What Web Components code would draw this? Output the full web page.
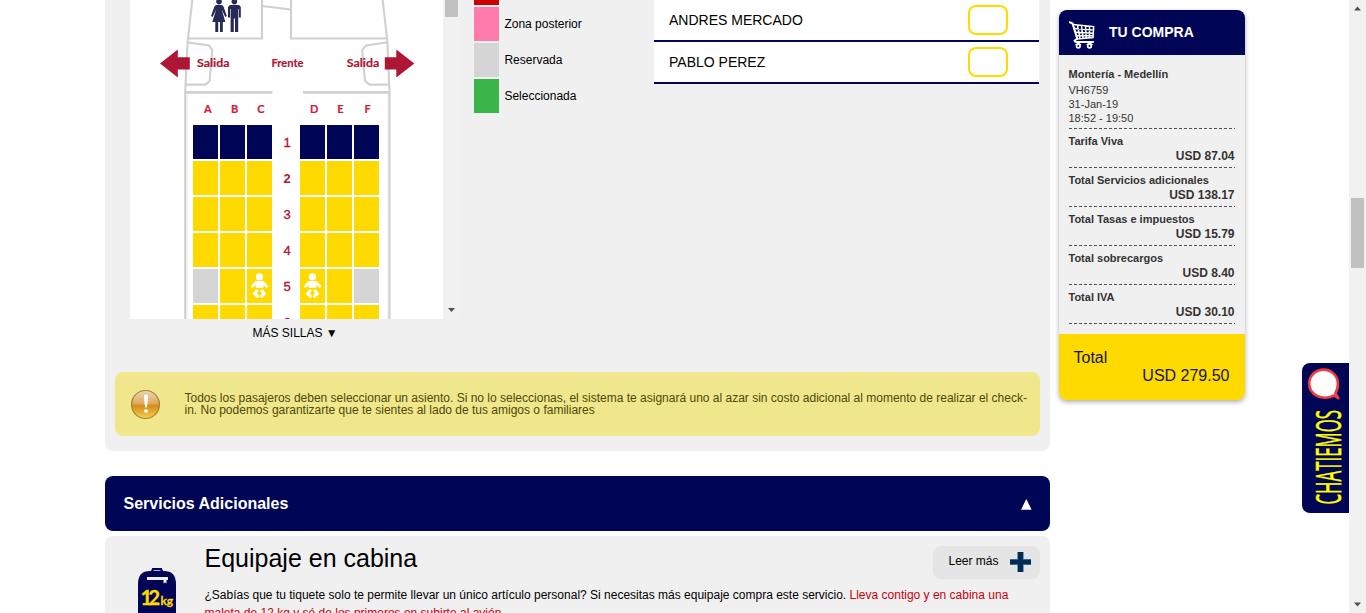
<!DOCTYPE html>
<html lang="es">
<head>
<meta charset="utf-8">
<title>Selección de sillas</title>
<style>
html,body{margin:0;height:613px;overflow:hidden;background:#fff}
body{font-family:"Liberation Sans",Arial,sans-serif;font-size:12px;color:#000}
</style>
</head>
<body>
<booking-page></booking-page>
<script>
const define = (name, html, setup) => customElements.define(name, class extends HTMLElement {
  constructor() {
    super();
    const t = document.createElement('template');
    t.innerHTML = html;
    this.attachShadow({mode: 'open'}).appendChild(t.content.cloneNode(true));
    if (setup) this.setup = setup;
  }
  connectedCallback() { if (this.setup) this.setup(this.shadowRoot); }
});

/* Aircraft outline with exits, front cabin and column letters */
define('plane-outline', `
<style>:host{display:block;width:313px;height:319px}svg{display:block}
text{font-family:Lato,"Open Sans",sans-serif;font-weight:700}</style>
<svg width="313" height="319" viewBox="0 0 313 319">
 <g fill="none" stroke="#d0d0d0" stroke-width="2.1">
  <path stroke="#efefef" stroke-width="1.5" d="M57 92V319M258 92V319"/>
  <path d="M62.3 0L57.6 42L55.2 92V319M252.7 0L257.4 42L259.5 92V319"/>
  <path d="M59 38.5H132V0M257 38.5H161V0M132 6L161 9.5"/>
  <path d="M58 42.5L79 45.5L82.3 50L79.6 81L75.5 84.6H56M257 42.5L236 45.5L232.2 50L235 81L239.5 84.6H259"/>
  <path stroke-width="2.6" d="M55 92.4H142.5M173 92.4H260"/>
 </g>
 <g fill="#ad1733">
  <path d="M30 63.5L47.8 49.5V57.3H59.8V69.6H47.8V77.4ZM284.3 63.5L266.3 49.5V57.3H254.8V69.6H266.3V77.4Z"/>
  <g font-size="11.8" stroke="#ad1733" stroke-width=".2">
   <text x="67" y="67.4" textLength="32.5" lengthAdjust="spacingAndGlyphs">Salida</text>
   <text x="141.5" y="67.4" textLength="32" lengthAdjust="spacingAndGlyphs">Frente</text>
   <text x="216.7" y="67.4" textLength="32.5" lengthAdjust="spacingAndGlyphs">Salida</text>
  </g>
 </g>
 <g fill="#d01a3c" stroke="#d01a3c" stroke-width=".2" font-size="11" text-anchor="middle">
  <text x="77.8" y="113">A</text><text x="104.5" y="113">B</text><text x="131" y="113">C</text>
  <text x="184.3" y="113">D</text><text x="210.5" y="113">E</text><text x="237.5" y="113">F</text>
 </g>
 <g fill="#252b55">
  <circle cx="89" cy="1.6" r="2.8"/><circle cx="104.4" cy="1.6" r="2.8"/>
  <path d="M86 5H92L93.5 6.5L96.8 16L95.2 17L91.8 9.5L95.3 22H92.8V32H90V22H88.2V32H85.3V22H82.3L86.2 9.5L82.6 17L81 16L84.4 6.5Z"/>
  <path d="M100 5H109L110.8 7V17.5H108.8V9H108.2V32H105V18.5H103.8V32H100.6V9H100V17.5H98V7Z"/>
 </g>
</svg>`);

define('plane-seat', `
<style>:host{display:block;width:25px;height:34px;background:#ffda00}
:host([kind=vip]){background:#000655}:host([kind=reserved]){background:#d5d5d5}
svg{display:none}:host([infant]) svg{display:block;width:25px;height:34px}</style>
<svg viewBox="0 0 25 34" fill="none" stroke="#fff" stroke-linecap="round" stroke-linejoin="round">
 <circle cx="12.5" cy="7.8" r="3.6" fill="#fff" stroke="none"/>
 <path stroke-width="2.8" d="M5.4 17.2L9 13.6H16L19.7 17.2"/>
 <path fill="#fff" stroke="none" d="M8.6 12.2H16.4V18.8H8.6Z"/>
 <path stroke-width="3.2" stroke-linejoin="miter" d="M9.9 22L7.8 24.6L10.4 27.2M15.1 22L17.2 24.6L14.6 27.2"/>
</svg>`);

define('seat-map', `
<style>
:host{display:grid;width:330px;height:319px;grid-template-columns:313px 17px;overflow:hidden}
.plane{background:#fff;display:grid;overflow:hidden;height:319px}
plane-outline,.seats{grid-area:1/1}
.seats{display:grid;grid-template-columns:repeat(3,25px) 24px repeat(3,25px);grid-auto-rows:34px;gap:2px;padding:125px 0 0 63px;align-content:start;height:194px}
.num{font-size:13px;line-height:35px;text-align:center;color:#ad1733;padding-left:2px;-webkit-text-stroke:.35px #ad1733}
.bold{font-weight:bold;-webkit-text-stroke:0}
.bar{background:#f1f1f1;display:flex;flex-direction:column;justify-content:space-between;align-items:center}
.thumb{width:13px;height:17px;background:#c1c1c1}
.bar svg{margin-bottom:6px;display:block}
</style>
<div class="plane"><plane-outline></plane-outline><div class="seats"></div></div>
<div class="bar"><div class="thumb"></div><svg width="7" height="6"><path fill="#505050" d="M0 1H7L3.5 5Z"/></svg></div>`,
root => {
  const box = root.querySelector('.seats');
  const rows = ['vvvvvv', 'ssssss', 'ssssss', 'ssssss', 'rsiisr', 'ssssss'];
  rows.forEach((row, r) => [...row].forEach((k, c) => {
    if (c === 3) {
      const n = document.createElement('div');
      n.className = 'num' + (r === 1 ? ' bold' : '');
      n.textContent = r + 1;
      box.append(n);
    }
    const s = document.createElement('plane-seat');
    if (k === 'v') s.setAttribute('kind', 'vip');
    if (k === 'r') s.setAttribute('kind', 'reserved');
    if (k === 'i') s.setAttribute('infant', '');
    box.append(s);
  }));
});

define('legend-item', `
<style>:host{display:flex;height:34px;align-items:center;gap:5.4px;line-height:14px}
i{width:25px;height:34px;background:var(--swatch)}</style><i></i><span><slot></slot></span>`);

define('passenger-row', `
<style>:host{display:flex;height:40px;box-sizing:content-box;border-bottom:2px solid #000655;background:#fff;align-items:center;justify-content:space-between;padding:0 31px 0 15px;font-size:14px}
i{box-sizing:border-box;width:40px;height:30px;border:2px solid #ffda00;border-radius:8px}</style>
<span><slot></slot></span><i></i>`);

define('notice-box', `
<style>:host{display:flex;box-sizing:border-box;width:925px;height:64px;background:#f0e68c;border-radius:8px;align-items:center;padding:0 11px 0 15px;color:#4d4a08}
svg{flex:none;width:31px;height:31px;margin-right:23.5px}p{margin:0;line-height:12px;font-size:12px;white-space:nowrap}</style>
<svg viewBox="0 0 31 31"><defs>
 <linearGradient id="g" x2="0" y2="1"><stop offset="0" stop-color="#dca665"/><stop offset=".45" stop-color="#d99a3c"/><stop offset=".55" stop-color="#d58d1c"/><stop offset="1" stop-color="#f5cf48"/></linearGradient>
 <linearGradient id="h" x2="0" y2="1"><stop offset="0" stop-color="#fff" stop-opacity=".5"/><stop offset="1" stop-color="#fff" stop-opacity=".12"/></linearGradient></defs>
 <circle cx="15.5" cy="15.5" r="14" fill="url(#g)" stroke="#a58442" stroke-width="1.2"/>
 <path fill="url(#h)" d="M2.5 15A13 13 0 0 1 28.5 15Q15 17 2.5 15Z"/>
 <path fill="#fff" d="M14 6Q16 4.8 18 6Q18.2 12 16.8 18.5H15.3Q13.9 12 14 6Z"/><ellipse cx="16" cy="22" rx="2.1" ry="1.8" fill="#fff"/>
</svg><p><slot></slot></p>`);

define('seat-section', `
<style>
:host{display:flex;flex-direction:column;box-sizing:border-box;width:945px;height:451px;background:#f0f0f0;border-radius:0 0 8px 8px}
.top{display:flex;height:319px;padding-left:25px}
.legend{display:grid;grid-auto-rows:34px;row-gap:2px;width:180px;margin:-29px 0 0 14px;align-content:start}
.names{width:385px}
.names passenger-row{width:339px}
.more{height:53px;padding-left:147.5px;line-height:28px;box-sizing:border-box}
notice-box{margin-left:10px}
</style>
<div class="top"><seat-map></seat-map>
 <div class="legend">
  <legend-item style="--swatch:#c00"></legend-item>
  <legend-item style="--swatch:#ff7bac">Zona posterior</legend-item>
  <legend-item style="--swatch:#d5d5d5">Reservada</legend-item>
  <legend-item style="--swatch:#39b54a">Seleccionada</legend-item>
 </div>
 <div class="names"><passenger-row>ANDRES MERCADO</passenger-row><passenger-row>PABLO PEREZ</passenger-row></div>
</div>
<div class="more">MÁS SILLAS ▼</div>
<notice-box>Todos los pasajeros deben seleccionar un asiento. Si no lo seleccionas, el sistema te asignará uno al azar sin costo adicional al momento de realizar el check-<br>in. No podemos garantizarte que te sientes al lado de tus amigos o familiares</notice-box>`);

define('section-bar', `
<style>:host{display:flex;box-sizing:border-box;height:55px;background:#000655;color:#fff;border-radius:8px;align-items:center;justify-content:space-between;padding:0 18.5px 0 18.5px;font-size:16px;font-weight:bold}
svg{display:block;margin-top:2px}</style><slot></slot>
<svg width="11" height="11"><path fill="#fff" d="M0 10.7L5.3 0L10.6 10.7Z"/></svg>`);

define('read-more', `
<style>:host{display:flex;box-sizing:border-box;width:107px;height:33px;background:#e5e5e5;border-radius:8px;justify-content:space-between;padding:6px 9px 0 15.5px;line-height:18px}</style>
<slot></slot><svg width="21" height="21"><path fill="#8499ad" d="M7 0H14V20H7ZM0 7H21V13H0Z"/><path fill="#002d56" d="M8 0H13V20H8ZM0 7.6H21V12.6H0Z"/></svg>`);

define('cabin-bag', `
<style>:host{display:block;width:38px;height:45px}svg{display:block;overflow:visible}text{font-family:Lato,sans-serif;font-weight:700}</style>
<svg width="38" height="45" viewBox="0 0 38 45">
 <path fill="#000655" d="M0 45V16Q0 3 12 3H26Q38 3 38 16V45Z"/>
 <path fill="none" stroke="#000655" stroke-width="2.2" d="M13.5 4.5L15 1.2H23L24.5 4.5"/>
 <path fill="#f0f0f0" d="M9 9H30V12H28.5V15.5L27 14.5L25.5 15.5V12H9Z"/>
 <g fill="#ffda00" stroke="#ffda00" stroke-width=".3"><text x="2.6" y="37.2" font-size="20.5" textLength="19.6">12</text><text x="22.4" y="37.2" font-size="12" textLength="12.5" lengthAdjust="spacingAndGlyphs">kg</text></g>
</svg>`);

define('service-card', `
<style>:host{display:flex;box-sizing:border-box;height:120px;background:#f0f0f0;border-radius:8px 8px 0 0;padding:1px 10px 0 0}
cabin-bag{margin:31px 28.5px 0 33px;flex:none}
.body{flex:1}.head{display:flex;justify-content:space-between;height:49px}
h2{margin:0;font-weight:normal;font-size:25px;line-height:43px}
read-more{margin-top:9px}
p{margin:0;line-height:18px;width:820px}b{font-weight:normal;color:#c8000f}</style>
<cabin-bag></cabin-bag>
<div class="body"><div class="head"><h2>Equipaje en cabina</h2><read-more>Leer más</read-more></div>
<p>¿Sabías que tu tiquete solo te permite llevar un único artículo personal? Si necesitas más equipaje compra este servicio. <b>Lleva contigo y en cabina una<br>maleta de 12 kg y sé de los primeros en subirte al avión.</b></p></div>`);

define('cost-line', `
<style>:host{display:block;font-weight:bold}
div{padding-top:5px;height:33px;font-size:11px;line-height:15px;box-sizing:content-box}
span{display:block;text-align:right;font-size:12px;line-height:14px}</style>
<div><slot></slot><span><slot name="value"></slot></span></div><dash-rule></dash-rule>`);

define('dash-rule', `
<style>:host{display:block;height:1px;width:166px;background:repeating-linear-gradient(90deg,#505050 0 3px,transparent 3px 5px)}</style>`);

define('cart-icon', `
<style>:host{display:block;width:26px;height:29px}svg{display:block}</style>
<svg width="26" height="29" viewBox="0 0 26 29" fill="none" stroke="#fff">
 <path stroke-width="2" d="M0 1L3.6 2.6L8.2 17.5L5.5 19.8Q5.8 21 7.5 21H24.8"/>
 <path stroke-width="1.5" d="M4 3.6L24.7 5.6L24 16.5L8 18M5 7.6L24.4 9M6 11.2L24 12.2M7 14.8L24 14.4M8.5 4.5L11 17M12.5 5L14 17M16.5 5.2L17.2 16.5M20.5 5.6V16.3"/>
 <circle cx="9.3" cy="25" r="1.8" stroke-width="1.7"/><circle cx="20.5" cy="25" r="1.8" stroke-width="1.7"/>
 <path stroke-width="1.5" d="M6.7 24Q9 21.3 12 24M17.8 24Q20.5 21.3 23.5 24"/>
</svg>`);

define('purchase-summary', `
<style>
:host{display:block;width:186px;height:390px;border-radius:8px;background:#f0f0f0;box-shadow:0 2px 5px rgba(0,0,0,.33);overflow:hidden;color:#333}
header{display:flex;box-sizing:border-box;height:45px;background:#000655;color:#fff;font-size:14px;font-weight:bold;padding:11px 10px 0;gap:14px;line-height:22px}
main{padding:11px 9px 0 9.5px;height:279px;box-sizing:border-box}
.trip{font-size:11px;line-height:14px;height:62px}.trip b{display:block;line-height:16px;margin-bottom:1px}
cost-line{width:166px;height:39px}
footer{background:#ffda00;box-sizing:border-box;height:66px;padding:15px 15.5px 0 14.5px;font-size:16px;line-height:18px;color:#15153c}
footer div+div{text-align:right}
</style>
<header><cart-icon></cart-icon><span>TU COMPRA</span></header>
<main>
 <div class="trip"><b>Montería - Medellín</b>VH6759<br>31-Jan-19<br>18:52 - 19:50</div><dash-rule></dash-rule>
 <cost-line>Tarifa Viva<span slot="value">USD 87.04</span></cost-line>
 <cost-line>Total Servicios adicionales<span slot="value">USD 138.17</span></cost-line>
 <cost-line>Total Tasas e impuestos<span slot="value">USD 15.79</span></cost-line>
 <cost-line>Total sobrecargos<span slot="value">USD 8.40</span></cost-line>
 <cost-line>Total IVA<span slot="value">USD 30.10</span></cost-line>
</main>
<footer><div>Total</div><div>USD 279.50</div></footer>`);

define('chat-tab', `
<style>:host{display:block;width:47px;height:150px;background:#000655;border-radius:8px 0 0 8px}svg{display:block}
text{font-family:"Open Sans",Roboto,sans-serif;font-weight:400}</style>
<svg width="47" height="150" viewBox="0 0 47 150">
 <path fill="#fff" stroke="#f03c3c" stroke-width="2.6" stroke-linejoin="round" d="M32 32.5C20 38.5 7.2 31.5 7.2 20.5C7.2 12.5 14 6.6 21.5 6.6C29.2 6.6 35.9 12.5 35.9 20.8C35.9 25 34.8 28 33.4 30L36.3 35.2Z"/>
 <text transform="translate(38.5 141.5) rotate(-90) scale(.5 1)" font-size="34.8" fill="#ff0" stroke="#ff0" stroke-width=".5" textLength="189" lengthAdjust="spacingAndGlyphs">CHATIEMOS</text>
</svg>`);

define('page-scrollbar', `
<style>:host{display:flex;flex-direction:column;justify-content:space-between;width:17px;height:613px;background:#f1f1f1;align-items:center}
svg{display:block;margin:6px 0}i{width:13px;height:70px;background:#c1c1c1;margin-top:181px;margin-bottom:auto}</style>
<svg width="7" height="5"><path fill="#505050" d="M0 4.5H7L3.5 .5Z"/></svg><i></i>
<svg width="7" height="5"><path fill="#505050" d="M0 .5H7L3.5 4.5Z"/></svg>`);

define('booking-page', `
<style>
:host{display:flex;width:1366px;height:613px;overflow:hidden}
.content{width:945px;margin-left:105px;flex:none}
section-bar{margin-top:25px}service-card{margin-top:5px}
purchase-summary{margin:10px 57px 0 9px;flex:none}
chat-tab{margin-top:363px;flex:none}page-scrollbar{flex:none}
</style>
<div class="content"><seat-section></seat-section><section-bar>Servicios Adicionales</section-bar><service-card></service-card></div>
<purchase-summary></purchase-summary><chat-tab></chat-tab><page-scrollbar></page-scrollbar>`);
</script>
</body>
</html>
